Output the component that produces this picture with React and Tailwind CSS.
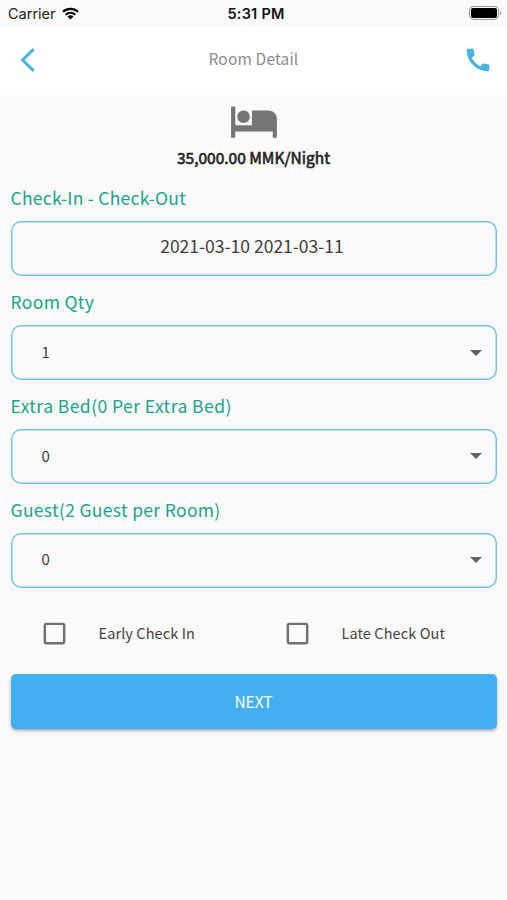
function StatusBar() {
  return (
    <div className="flex h-[26px] items-center justify-between pl-2 pr-1.5 font-['Inter','Liberation_Sans',sans-serif] text-black">
      <div className="flex flex-1 items-center gap-[6px] pt-px">
        <span className="pt-px text-[14.5px] leading-5 text-[#222]">Carrier</span>
        <svg className="h-[13px] w-[17px]" viewBox="0 0 17 13" fill="none">
          <path d="M1 4.8C5.2.8 11.8.8 16 4.8M3.7 7.7c2.7-2.6 6.9-2.6 9.6 0" stroke="black" strokeWidth="2.2" />
          <path d="M5.5 9.5c1.7-1.6 4.3-1.6 6 0L8.5 12.5z" fill="black" />
        </svg>
      </div>
      <span className="pl-[3px] pt-[2px] text-[14.5px] font-semibold leading-5 tracking-[0.25px] text-[#111]">5:31 PM</span>
      <div className="flex flex-1 items-center justify-end gap-px">
        <div className="h-[14px] w-[30px] rounded-[4px] border border-[#999] p-px">
          <div className="h-full rounded-[2px] bg-black" />
        </div>
        <div className="h-1 w-[1.5px] rounded-r bg-[#888]" />
      </div>
    </div>
  );
}

function Header() {
  return (
    <header className="flex h-[67px] items-center justify-between bg-white pl-5 pr-[14px]">
      <svg className="h-6 w-[15px]" viewBox="0 0 15 24" fill="none" stroke="#45b3e3" strokeWidth="3">
        <path d="M13.7 1.2 2.6 12l11.1 10.8" />
      </svg>
      <h1 className="pb-[3px] pl-[9px] text-[15.5px] leading-6 tracking-[0.15px] text-[#8b8b8b]">Room Detail</h1>
      <svg className="size-[30px]" viewBox="0 0 24 24" fill="#45b3e3">
        <path d="M20.01 15.38c-1.23 0-2.42-.2-3.53-.56-.35-.12-.74-.03-1.01.24l-1.57 1.97c-2.83-1.35-5.48-3.9-6.89-6.83l1.95-1.66c.27-.28.35-.67.24-1.02-.37-1.11-.56-2.3-.56-3.53 0-.54-.45-.99-.99-.99H4.19C3.65 3 3 3.24 3 3.99 3 13.28 10.73 21 20.01 21c.71 0 .99-.63.99-1.18v-3.45c0-.54-.45-.99-.99-.99z" />
      </svg>
    </header>
  );
}

function Label({ children, tracking = "tracking-[0.25px]" }) {
  return <div className={`h-[32px] text-[17.5px] leading-[30px] text-[#1ba28a] ${tracking}`}>{children}</div>;
}

function SelectField({ label, value, tracking }) {
  return (
    <div className="flex h-[103.8px] flex-col gap-[6px]">
      <Label tracking={tracking}>{label}</Label>
      <div className="flex h-[55px] items-center justify-between rounded-[10px] pl-[31px] pr-[14.5px] text-[15px] text-[#3c3c3c] shadow-[inset_0_0_0_1.5px_#73c3eb]">
        <span className="pb-px">{value}</span>
        <svg className="h-[6px] w-3" viewBox="0 0 12 6" fill="#616161">
          <path d="M0 0h12L6 6z" />
        </svg>
      </div>
    </div>
  );
}

function CheckOption({ label }) {
  return (
    <div className="flex flex-1 items-center gap-[29.5px] pl-[29.5px]">
      <svg className="size-[29px]" viewBox="0 0 24 24" fill="#6f6f6f">
        <path d="M19 5v14H5V5h14m0-2H5c-1.1 0-2 .9-2 2v14c0 1.1.9 2 2 2h14c1.1 0 2-.9 2-2V5c0-1.1-.9-2-2-2z" />
      </svg>
      <span className="text-[14.5px] leading-6 tracking-[0.1px] text-[#444]">{label}</span>
    </div>
  );
}

export default function App() {
  return (
    <div className="flex h-[900px] w-[507px] flex-col overflow-hidden bg-[#fafafa] font-['Noto_Sans_CJK_SC','Noto_Sans',sans-serif]">
      <StatusBar />
      <Header />
      <main className="flex flex-col px-[10.5px] pt-[3px]">
        <svg className="size-[50px] self-center" viewBox="0 0 24 24" fill="#757575">
          <path d="M7 13c1.66 0 3-1.34 3-3S8.66 7 7 7s-3 1.34-3 3 1.34 3 3 3zm12-6h-8v7H3V5H1v15h2v-3h18v3h2v-9c0-2.21-1.79-4-4-4z" />
        </svg>
        <div className="h-6 text-center text-[15.5px] leading-[22px] text-[#222] [-webkit-text-stroke:0.6px_#222]">35,000.00 MMK/Night</div>
        <div className="mt-[13px] flex h-[104px] flex-col gap-[6px]">
          <Label>Check-In - Check-Out</Label>
          <div className="flex h-[55px] items-center justify-center rounded-[10px] pb-1 pr-[3px] text-[17.5px] text-[#3c3c3c] shadow-[inset_0_0_0_1.5px_#73c3eb]">
            2021-03-10 2021-03-11
          </div>
        </div>
        <SelectField label="Room Qty" value="1" tracking="tracking-[0.35px]" />
        <SelectField label="Extra Bed(0 Per Extra Bed)" value="0" tracking="tracking-[0.44px]" />
        <SelectField label="Guest(2 Guest per Room)" value="0" tracking="tracking-[0.33px]" />
        <div className="mt-[6px] flex h-[58px]">
          <CheckOption label="Early Check In" />
          <CheckOption label="Late Check Out" />
        </div>
        <button className="mt-[12px] h-[55px] rounded-[5px] bg-[#43aef1] pb-px text-[15.5px] text-white shadow-[0_2px_3px_rgba(0,0,0,0.3)]">
          NEXT
        </button>
      </main>
    </div>
  );
}
